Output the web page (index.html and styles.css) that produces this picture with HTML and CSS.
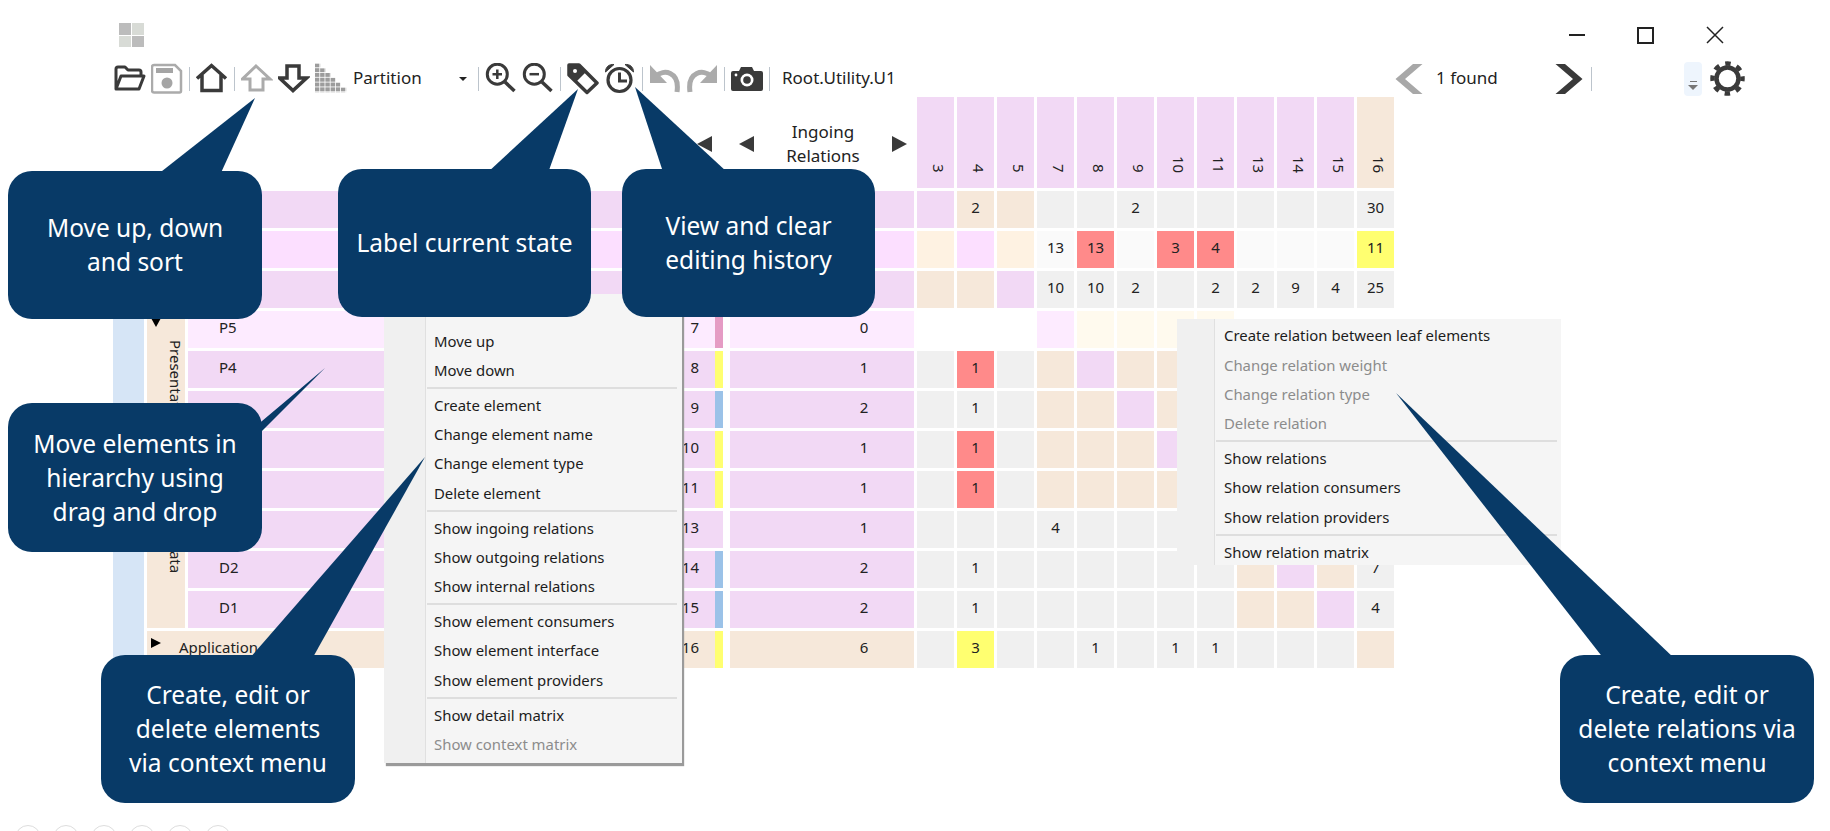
FILE: index.html
```html
<!DOCTYPE html>
<html lang="en">
<head>
    <meta charset="UTF-8">
    <title>DSM Suite Viewer</title>
    <link rel="stylesheet" href="styles.css">
</head>
<body>
<div class="titlebar">
    <div class="app-icon"><i></i><i class="pale"></i><i class="pale"></i><i></i></div>
    <div class="win-buttons">
        <div class="win-btn"><span class="win-min"></span></div>
        <div class="win-btn"><span class="win-max"></span></div>
        <div class="win-btn">
            <svg width="18" height="18" viewBox="0 0 18 18"><path d="M1 1 L17 17 M17 1 L1 17" stroke="#222" stroke-width="1.5" fill="none"/></svg>
        </div>
    </div>
</div>

<div class="toolbar">
    <svg class="tool" viewBox="0 0 32 32"><path d="M2 26 V6 q0-2 2-2 h7 l3 3 h11 q2 0 2 2 v3 M2 26 l5-13 h23 l-5 13 z" stroke="#3a3a3a" stroke-width="3" fill="none" stroke-linejoin="round"/></svg>
    <svg class="tool" viewBox="0 0 32 32"><path d="M3 2 h21 l6 6 v20 q0 1.5-1.5 1.5 H3 q-2 0-2-2 V4 q0-2 2-2z" stroke="#ababab" stroke-width="2.5" fill="none"/><rect x="5" y="5" width="17" height="5" fill="#a5a5a5"/><circle cx="16" cy="20" r="5.5" fill="#a5a5a5"/></svg>
    <span class="sep"></span>
    <svg class="tool" viewBox="0 0 32 32"><path d="M1 15.5 L15.5 2.5 L30 15.5 M6 12 V27.5 H25 V12" stroke="#3a3a3a" stroke-width="3.5" fill="none"/></svg>
    <span class="sep"></span>
    <svg class="tool" viewBox="0 0 32 32"><path d="M15 3 L29 16 H22 V27 H9 V16 H1.5 Z" stroke="#ababab" stroke-width="3" fill="none"/></svg>
    <svg class="tool" viewBox="0 0 32 32"><path d="M9 3 H21 V15 H28.5 L15 27.5 L1.5 15 H9 Z" stroke="#3a3a3a" stroke-width="3.5" fill="none"/></svg>
    <svg class="tool" viewBox="0 0 32 32"><defs><pattern id="dots" width="5.2" height="4.8" patternUnits="userSpaceOnUse" y="0.4"><rect width="4.4" height="4" fill="#9c9c9c"/></pattern></defs><path d="M0 0.4 H5.2 V5.2 H10.4 V10 H15.6 V14.8 H20.8 V19.6 H26 V24.4 H31.2 V29.2 H0 Z" fill="url(#dots)"/></svg>
    <div class="combo"><span class="tool-text">Partition</span><span class="combo-arrow"></span></div>
    <span class="sep"></span>
    <svg class="tool" viewBox="0 0 32 32"><circle cx="12.3" cy="11.2" r="10" stroke="#3a3a3a" stroke-width="3" fill="none"/><path d="M20 19 L29.5 28" stroke="#3a3a3a" stroke-width="3.5"/><path d="M12.3 6.5 V16 M7.5 11.2 H17" stroke="#3a3a3a" stroke-width="2.5"/></svg>
    <svg class="tool" viewBox="0 0 32 32"><circle cx="12.3" cy="11.2" r="10" stroke="#3a3a3a" stroke-width="3" fill="none"/><path d="M20 19 L29.5 28" stroke="#3a3a3a" stroke-width="3.5"/><path d="M7.5 11.2 H17" stroke="#3a3a3a" stroke-width="2.5"/></svg>
    <span class="sep"></span>
    <svg class="tool" viewBox="0 0 32 32"><path d="M2 2 H12 L30 20 L20 29.5 L2 12 Z" stroke="#3a3a3a" stroke-width="3.5" fill="none" stroke-linejoin="round"/><path d="M2 2 H12 L19 9 L9 19 L2 12 Z" fill="#3a3a3a"/><circle cx="8" cy="8" r="2" fill="#fff"/></svg>
    <svg class="tool" viewBox="0 0 32 32"><circle cx="15.5" cy="17" r="11.5" stroke="#3a3a3a" stroke-width="3.2" fill="none"/><path d="M15.5 9.5 V18 H23" stroke="#3a3a3a" stroke-width="3" fill="none"/><path d="M1.5 9 C1.5 4 5 1 10 1.5 Z M29.5 9 C29.5 4 26 1 21 1.5 Z" fill="#3a3a3a" stroke="#3a3a3a"/></svg>
    <span class="sep"></span>
    <svg class="tool" viewBox="0 0 32 32"><path d="M7 13 C14 6 31 8 28 29" stroke="#ababab" stroke-width="5" fill="none"/><path d="M1 2 L1 20 L18 20 Z" fill="#ababab"/></svg>
    <svg class="tool" viewBox="0 0 32 32"><path d="M25 13 C18 6 1 8 4 29" stroke="#ababab" stroke-width="5" fill="none"/><path d="M31 2 L31 20 L14 20 Z" fill="#ababab"/></svg>
    <span class="sep"></span>
    <svg class="tool" viewBox="0 0 32 32"><path d="M2 8 h6 l2-4 h11 l2 4 h7 q2 0 2 2 v16 q0 2-2 2 H2 q-2 0-2-2 V10 q0-2 2-2z" fill="#3a3a3a"/><circle cx="16" cy="17" r="6.5" fill="#fff"/><circle cx="16" cy="17" r="3.8" fill="#3a3a3a"/><circle cx="5" cy="12" r="1.4" fill="#fff"/></svg>
    <span class="sep"></span>
    <span class="path-label tool-text">Root.Utility.U1</span>

    <div class="search">
        <svg width="28" height="30" viewBox="0 0 28 30"><path d="M18 0 H27.5 L10 15 L27.5 30 H18 L0.5 15 Z" fill="#a8a8a8"/></svg>
        <span class="found tool-text">1 found</span>
        <svg width="28" height="30" viewBox="0 0 28 30"><path d="M10 0 H0.5 L18 15 L0.5 30 H10 L27.5 15 Z" fill="#3a3a3a"/></svg>
        <span class="sep"></span>
    </div>
    <div class="spinner"><span class="spin-dash"></span><span class="spin-arrow"></span></div>
    <svg class="gear" width="35" height="35" viewBox="0 0 35 35"><circle cx="17.5" cy="17.5" r="11" stroke="#3a3a3a" stroke-width="4.5" fill="none"/><circle cx="17.5" cy="17.5" r="15" stroke="#3a3a3a" stroke-width="4.5" fill="none" stroke-dasharray="5.5 6.28" stroke-dashoffset="2.75"/></svg>
</div>

<div class="matrix">
    <!-- header -->
    <div class="head-tree"><span class="tri-left"></span></div>
    <div class="head-ingoing">
        <span class="tri-left"></span>
        <span class="head-title">Ingoing<br>Relations</span>
        <span class="tri-right"></span>
    </div>
    <div class="head-col pink"><span>3</span></div>
    <div class="head-col pink"><span>4</span></div>
    <div class="head-col pink"><span>5</span></div>
    <div class="head-col pink"><span>7</span></div>
    <div class="head-col pink"><span>8</span></div>
    <div class="head-col pink"><span>9</span></div>
    <div class="head-col pink"><span>10</span></div>
    <div class="head-col pink"><span>11</span></div>
    <div class="head-col pink"><span>13</span></div>
    <div class="head-col pink"><span>14</span></div>
    <div class="head-col pink"><span>15</span></div>
    <div class="head-col beige"><span>16</span></div>

    <div class="root-col"></div>
    <div class="group group-utility beige"><span class="tri-down"></span><span class="group-name">Utility</span></div>
    <div class="group group-presentation beige"><span class="tri-down"></span><span class="group-name">Presentation</span></div>
    <div class="group group-data beige"><span class="tri-down"></span><span class="group-name">Data</span></div>

    <!-- row 3 -->
    <div class="row-label pink"><span class="row-name"></span><span class="row-num"></span><span class="bar"></span></div>
    <div class="ingoing pink"></div>
    <div class="cell pink"></div><div class="cell beige">2</div><div class="cell beige"></div><div class="cell grey"></div><div class="cell grey"></div><div class="cell grey">2</div><div class="cell grey"></div><div class="cell grey"></div><div class="cell grey"></div><div class="cell grey"></div><div class="cell grey"></div><div class="cell grey">30</div>
    <!-- row 4 -->
    <div class="row-label hl"><span class="row-name"></span><span class="row-num"></span><span class="bar"></span></div>
    <div class="ingoing hl"></div>
    <div class="cell lbeige"></div><div class="cell hl"></div><div class="cell lbeige"></div><div class="cell soft">13</div><div class="cell red">13</div><div class="cell soft"></div><div class="cell red">3</div><div class="cell red">4</div><div class="cell soft"></div><div class="cell soft"></div><div class="cell soft"></div><div class="cell yellow">11</div>
    <!-- row 5 -->
    <div class="row-label pink"><span class="row-name"></span><span class="row-num"></span><span class="bar"></span></div>
    <div class="ingoing pink"></div>
    <div class="cell beige"></div><div class="cell beige"></div><div class="cell pink"></div><div class="cell grey">10</div><div class="cell grey">10</div><div class="cell grey">2</div><div class="cell grey"></div><div class="cell grey">2</div><div class="cell grey">2</div><div class="cell grey">9</div><div class="cell grey">4</div><div class="cell grey">25</div>
    <!-- row 7 -->
    <div class="row-label pale-pink"><span class="row-name">P5</span><span class="row-num">7</span><span class="bar bar-pink"></span></div>
    <div class="ingoing pale-pink">0</div>
    <div class="cell"></div><div class="cell"></div><div class="cell"></div><div class="cell pale-pink"></div><div class="cell lyellow"></div><div class="cell lyellow"></div><div class="cell lyellow"></div><div class="cell lyellow"></div><div class="cell"></div><div class="cell"></div><div class="cell"></div><div class="cell"></div>
    <!-- row 8 -->
    <div class="row-label pink"><span class="row-name">P4</span><span class="row-num">8</span><span class="bar bar-yellow"></span></div>
    <div class="ingoing pink">1</div>
    <div class="cell grey"></div><div class="cell red">1</div><div class="cell grey"></div><div class="cell beige"></div><div class="cell pink"></div><div class="cell beige"></div><div class="cell beige"></div><div class="cell beige"></div><div class="cell"></div><div class="cell"></div><div class="cell"></div><div class="cell"></div>
    <!-- row 9 -->
    <div class="row-label pink"><span class="row-name">P3</span><span class="row-num">9</span><span class="bar bar-blue"></span></div>
    <div class="ingoing pink">2</div>
    <div class="cell grey"></div><div class="cell grey">1</div><div class="cell grey"></div><div class="cell beige"></div><div class="cell beige"></div><div class="cell pink"></div><div class="cell beige"></div><div class="cell beige"></div><div class="cell"></div><div class="cell"></div><div class="cell"></div><div class="cell"></div>
    <!-- row 10 -->
    <div class="row-label pink"><span class="row-name"></span><span class="row-num">10</span><span class="bar bar-yellow"></span></div>
    <div class="ingoing pink">1</div>
    <div class="cell grey"></div><div class="cell red">1</div><div class="cell grey"></div><div class="cell beige"></div><div class="cell beige"></div><div class="cell beige"></div><div class="cell pink"></div><div class="cell beige"></div><div class="cell"></div><div class="cell"></div><div class="cell"></div><div class="cell"></div>
    <!-- row 11 -->
    <div class="row-label pink"><span class="row-name"></span><span class="row-num">11</span><span class="bar bar-yellow"></span></div>
    <div class="ingoing pink">1</div>
    <div class="cell grey"></div><div class="cell red">1</div><div class="cell grey"></div><div class="cell beige"></div><div class="cell beige"></div><div class="cell beige"></div><div class="cell beige"></div><div class="cell pink"></div><div class="cell"></div><div class="cell"></div><div class="cell"></div><div class="cell"></div>
    <!-- row 13 -->
    <div class="row-label pink"><span class="row-name"></span><span class="row-num">13</span><span class="bar"></span></div>
    <div class="ingoing pink">1</div>
    <div class="cell grey"></div><div class="cell grey"></div><div class="cell grey"></div><div class="cell grey">4</div><div class="cell grey"></div><div class="cell grey"></div><div class="cell grey"></div><div class="cell grey"></div><div class="cell"></div><div class="cell"></div><div class="cell"></div><div class="cell"></div>
    <!-- row 14 -->
    <div class="row-label pink"><span class="row-name">D2</span><span class="row-num">14</span><span class="bar bar-blue"></span></div>
    <div class="ingoing pink">2</div>
    <div class="cell grey"></div><div class="cell grey">1</div><div class="cell grey"></div><div class="cell grey"></div><div class="cell grey"></div><div class="cell grey"></div><div class="cell grey"></div><div class="cell grey"></div><div class="cell beige"></div><div class="cell pink"></div><div class="cell beige"></div><div class="cell grey">7</div>
    <!-- row 15 -->
    <div class="row-label pink"><span class="row-name">D1</span><span class="row-num">15</span><span class="bar bar-blue"></span></div>
    <div class="ingoing pink">2</div>
    <div class="cell grey"></div><div class="cell grey">1</div><div class="cell grey"></div><div class="cell grey"></div><div class="cell grey"></div><div class="cell grey"></div><div class="cell grey"></div><div class="cell grey"></div><div class="cell beige"></div><div class="cell beige"></div><div class="cell pink"></div><div class="cell grey">4</div>
    <!-- row 16 -->
    <div class="row-label row-app beige"><span class="tri-right-small"></span><span class="row-name">Application</span><span class="row-num">16</span><span class="bar bar-yellow"></span></div>
    <div class="ingoing beige">6</div>
    <div class="cell grey"></div><div class="cell yellow">3</div><div class="cell grey"></div><div class="cell grey"></div><div class="cell grey">1</div><div class="cell grey"></div><div class="cell grey">1</div><div class="cell grey">1</div><div class="cell grey"></div><div class="cell grey"></div><div class="cell grey"></div><div class="cell beige"></div>
</div>

<div class="dots"><i></i><i></i><i></i><i></i><i></i><i></i></div>

<!-- context menu on the elements -->
<div class="menu menu-element">
    <div class="menu-item">Sort</div>
    <div class="menu-item">Move up</div>
    <div class="menu-item">Move down</div>
    <div class="menu-sep"></div>
    <div class="menu-item">Create element</div>
    <div class="menu-item">Change element name</div>
    <div class="menu-item">Change element type</div>
    <div class="menu-item">Delete element</div>
    <div class="menu-sep"></div>
    <div class="menu-item">Show ingoing relations</div>
    <div class="menu-item">Show outgoing relations</div>
    <div class="menu-item">Show internal relations</div>
    <div class="menu-sep"></div>
    <div class="menu-item">Show element consumers</div>
    <div class="menu-item">Show element interface</div>
    <div class="menu-item">Show element providers</div>
    <div class="menu-sep"></div>
    <div class="menu-item">Show detail matrix</div>
    <div class="menu-item off">Show context matrix</div>
</div>

<!-- context menu on the relations -->
<div class="menu menu-relation">
    <div class="menu-item">Create relation between leaf elements</div>
    <div class="menu-item off">Change relation weight</div>
    <div class="menu-item off">Change relation type</div>
    <div class="menu-item off">Delete relation</div>
    <div class="menu-sep"></div>
    <div class="menu-item">Show relations</div>
    <div class="menu-item">Show relation consumers</div>
    <div class="menu-item">Show relation providers</div>
    <div class="menu-sep"></div>
    <div class="menu-item">Show relation matrix</div>
</div>

<svg class="tails" width="1830" height="831" viewBox="0 0 1830 831">
    <polygon points="255,98 157,175 220,175"/>
    <polygon points="578,89 487,173 548,173"/>
    <polygon points="635,87 663,172 727,172"/>
    <polygon points="325,368 262,431 262,463 250,463 250,431"/>
    <polygon points="425,457 249,659 312,659"/>
    <polygon points="1396,393 1604,659 1675,659"/>
</svg>

<div class="callout callout-move">Move up, down<br>and sort</div>
<div class="callout callout-label">Label current state</div>
<div class="callout callout-history">View and clear<br>editing history</div>
<div class="callout callout-drag">Move elements in<br>hierarchy using<br>drag and drop</div>
<div class="callout callout-elements">Create, edit or<br>delete elements<br>via context menu</div>
<div class="callout callout-relations">Create, edit or<br>delete relations via<br>context menu</div>
</body>
</html>
```
FILE: styles.css
```css
html, body {
    margin: 0;
    padding: 0;
    width: 1830px;
    height: 831px;
    overflow: hidden;
    background: white;
    font-family: "Noto Sans", "Open Sans", sans-serif;
    font-size: 15px;
    color: #222;
}

/* title bar */
.titlebar {
    height: 60px;
    box-sizing: border-box;
    padding: 23px 81px 0 119px;
    display: flex;
    justify-content: space-between;
}
.app-icon {
    width: 25px;
    height: 24px;
    display: grid;
    grid-template-columns: 1fr 1fr;
    gap: 1px;
}
.app-icon i {
    background: #bcbcbc;
}
.app-icon i.pale {
    background: #d8dbd6;
}
.win-buttons {
    display: flex;
    height: 24px;
}
.win-btn {
    width: 69px;
    display: flex;
    align-items: center;
    justify-content: center;
}
.win-min {
    width: 16px;
    height: 2px;
    background: #222;
}
.win-max {
    width: 13px;
    height: 13px;
    border: 2px solid #222;
}

/* toolbar */
.toolbar {
    height: 37px;
    box-sizing: border-box;
    padding: 0 85px 0 114px;
    display: flex;
    align-items: center;
    gap: 5px;
}
.tool {
    width: 32px;
    height: 32px;
    flex: none;
}
.tool-text {
    font-size: 17px;
    margin-top: -3px;
}
.sep {
    width: 1px;
    height: 24px;
    margin: 0 1px;
    background: #bcc4cc;
    flex: none;
}
.combo {
    width: 119px;
    margin-left: 1px;
    display: flex;
    align-items: center;
    justify-content: space-between;
    padding-right: 5px;
    box-sizing: border-box;
}
.combo-arrow {
    border-top: 4px solid #222;
    border-left: 4px solid transparent;
    border-right: 4px solid transparent;
}
.path-label {
    margin-left: 6px;
}
.search {
    margin-left: auto;
    display: flex;
    align-items: center;
    margin-right: 87px;
}
.found {
    width: 132px;
    padding-left: 13px;
    box-sizing: border-box;
}
.search .sep {
    margin-left: 8px;
    margin-right: 0;
}
.spinner {
    width: 18px;
    height: 34px;
    background: #eef5fd;
    border-radius: 4px;
    display: flex;
    flex-direction: column;
    align-items: center;
    justify-content: flex-end;
    gap: 3px;
    padding-bottom: 6px;
    box-sizing: border-box;
}
.spin-dash {
    width: 7px;
    height: 1px;
    background: #777;
}
.spin-arrow {
    border-top: 5px solid #777;
    border-left: 5px solid transparent;
    border-right: 5px solid transparent;
}
.gear {
    margin-left: 3px;
    flex: none;
}

/* matrix */
.matrix {
    margin-left: 113px;
    display: grid;
    grid-template-columns: 31px 38px 535px 188px repeat(12, 37px);
    grid-template-rows: 91px repeat(12, 37px);
    gap: 3px;
    width: max-content;
}
.head-tree {
    grid-column: 1 / span 3;
    display: flex;
    align-items: center;
    justify-content: flex-end;
    padding: 3px 11px 0 0;
}
.head-ingoing {
    margin-left: 4px;
    padding: 3px 7px 0 9px;
    display: flex;
    align-items: center;
    justify-content: space-between;
    font-size: 17px;
    line-height: 24px;
    text-align: center;
}
.tri-left {
    border-right: 15px solid #3a3a3a;
    border-top: 8px solid transparent;
    border-bottom: 8px solid transparent;
}
.tri-right {
    border-left: 15px solid #3a3a3a;
    border-top: 8px solid transparent;
    border-bottom: 8px solid transparent;
}
.head-col {
    display: flex;
    align-items: flex-end;
    justify-content: center;
    padding: 0 0 15px 5px;
    box-sizing: border-box;
}
.head-col span {
    writing-mode: vertical-rl;
    line-height: 1;
}
.root-col {
    grid-column: 1;
    grid-row: 2 / span 12;
    background: #d6e5f6;
}
.group {
    grid-column: 2;
    display: flex;
    flex-direction: column;
    box-sizing: border-box;
    padding: 7px 0 0 4px;
}
.group-utility {
    grid-row: 2 / span 3;
}
.group-presentation {
    grid-row: 5 / span 5;
}
.group-data {
    grid-row: 10 / span 3;
}
.group-name {
    writing-mode: vertical-rl;
    margin: 13px 0 0 2px;
    line-height: 18px;
}
.tri-down {
    width: 0;
    border-top: 9px solid black;
    border-left: 5.5px solid transparent;
    border-right: 5.5px solid transparent;
}
.row-label {
    grid-column: 3;
    display: flex;
    align-items: stretch;
    line-height: 33px;
}
.row-name {
    flex: 1;
    padding-left: 31px;
}
.row-num {
    padding-right: 16px;
}
.bar {
    width: 8px;
    flex: none;
}
.row-app {
    grid-column: 2 / span 2;
}
.row-app .row-name {
    padding-left: 18px;
}
.tri-right-small {
    width: 0;
    height: 0;
    margin: 7px 0 0 4px;
    border-left: 10px solid black;
    border-top: 5px solid transparent;
    border-bottom: 5px solid transparent;
}
.bar-pink {
    background: #e59cc4;
}
.bar-yellow {
    background: #ffff70;
}
.bar-blue {
    background: #9bc2e8;
}
.ingoing {
    grid-column: 4;
    margin-left: 4px;
    padding-left: 84px;
    text-align: center;
    line-height: 33px;
}
.cell {
    text-align: center;
    line-height: 33px;
}
.pink {
    background: #f2d9f5;
}
.pale-pink {
    background: #fdebff;
}
.hl {
    background: #fcdfff;
}
.beige {
    background: #f6e8da;
}
.lbeige {
    background: #fef2e2;
}
.lyellow {
    background: #fffaee;
}
.grey {
    background: #f0f0f0;
}
.soft {
    background: #fafafa;
}
.red {
    background: #ff8a8a;
}
.yellow {
    background: #ffff70;
}

/* page indicator at the bottom edge */
.dots {
    margin-top: 157px;
    padding-left: 15px;
    display: flex;
    gap: 12px;
}
.dots i {
    width: 24px;
    height: 24px;
    border: 1px solid #ddd;
    border-radius: 50%;
    flex: none;
}

/* context menus */
.menu {
    position: absolute;
    box-sizing: border-box;
    background: linear-gradient(to right, #f0f0f0 var(--gutter), #e0e0e0 var(--gutter), #e0e0e0 calc(var(--gutter) + 1px), #f5f5f5 calc(var(--gutter) + 1px));
    font-size: 14.9px;
    --gutter: 41px;
    overflow: hidden;
}
.menu-element {
    left: 384px;
    top: 294px;
    width: 298px;
    height: 469px;
    padding-top: 3.4px;
    box-shadow: 2px 3px 1px #9a9a9a;
    overflow: visible;
}
.menu-relation {
    left: 1177px;
    top: 319px;
    width: 384px;
    height: 246px;
    padding-top: 2.4px;
    --gutter: 37px;
}
.menu-item {
    height: 29.2px;
    line-height: 29.2px;
    padding-left: 50px;
    color: #1c1c1c;
    white-space: nowrap;
}
.menu-relation .menu-item {
    padding-left: 47px;
}
.menu-item.off {
    color: #8c8c8c;
}
.menu-sep {
    height: 2px;
    margin: 2px 5px 2px 43px;
    background: #dedede;
}
.menu-relation .menu-sep {
    margin-left: 39px;
    margin-right: 4px;
}

/* callouts */
.tails {
    position: absolute;
    left: 0;
    top: 0;
}
.tails polygon {
    fill: #083a67;
}
.callout {
    position: absolute;
    width: 254px;
    height: 148px;
    box-sizing: border-box;
    background: #083a67;
    border-radius: 24px;
    color: white;
    display: flex;
    align-items: center;
    justify-content: center;
    text-align: center;
    font-size: 24.5px;
    line-height: 34px;
}
.callout-move {
    left: 8px;
    top: 171px;
}
.callout-label {
    left: 338px;
    top: 169px;
    width: 253px;
}
.callout-history {
    left: 622px;
    top: 169px;
    width: 253px;
}
.callout-drag {
    left: 8px;
    top: 403px;
    height: 149px;
}
.callout-elements {
    left: 101px;
    top: 655px;
}
.callout-relations {
    left: 1560px;
    top: 655px;
}
```
